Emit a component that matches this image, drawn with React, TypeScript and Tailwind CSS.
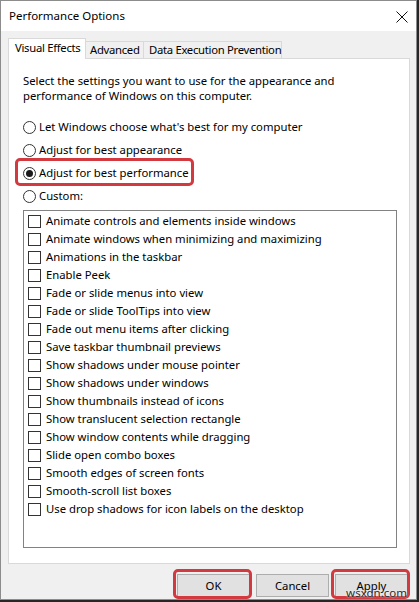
import React from "react";

const effects = [
  "Animate controls and elements inside windows",
  "Animate windows when minimizing and maximizing",
  "Animations in the taskbar",
  "Enable Peek",
  "Fade or slide menus into view",
  "Fade or slide ToolTips into view",
  "Fade out menu items after clicking",
  "Save taskbar thumbnail previews",
  "Show shadows under mouse pointer",
  "Show shadows under windows",
  "Show thumbnails instead of icons",
  "Show translucent selection rectangle",
  "Show window contents while dragging",
  "Slide open combo boxes",
  "Smooth edges of screen fonts",
  "Smooth-scroll list boxes",
  "Use drop shadows for icon labels on the desktop",
];

const radios = [
  { label: "Let Windows choose what's best for my computer", checked: false },
  { label: "Adjust for best appearance", checked: false },
  { label: "Adjust for best performance", checked: true },
  { label: "Custom:", checked: false },
];

function Radio({ checked }: { checked: boolean }) {
  return (
    <span className="w-[13px] h-[13px] rounded-full border border-[#333] bg-white flex items-center justify-center shrink-0">
      {checked && <span className="w-[7px] h-[7px] rounded-full bg-[#1a1a1a]" />}
    </span>
  );
}

function Button({ label, marked }: { label: string; marked?: boolean }) {
  return (
    <div className="relative">
      <button className="w-[73px] h-[23px] bg-[#e1e1e1] border border-[#adadad] text-[11.3px] leading-none text-black">
        {label}
      </button>
      {marked && (
        <div className="absolute -left-[4px] -right-[2px] -top-[3px] -bottom-[2px] border-[3px] border-[#d23a40] rounded-[5px]" />
      )}
    </div>
  );
}

export default function App() {
  return (
    <div
      className="w-[419px] h-[602px] bg-[#262626] text-black"
      style={{ fontFamily: '"Segoe UI", "Noto Sans", sans-serif' }}
    >
      <div className="w-[417px] h-[600px] border border-[#8c8c8c] bg-[#f0f0f0] flex flex-col">
        {/* title bar */}
        <div className="h-[30px] bg-white flex items-center justify-between pl-[8px] pr-[8px]">
          <span className="text-[11.5px]">Performance Options</span>
          <svg width="12" height="12" viewBox="0 0 12 12" className="mt-[1px]">
            <path d="M0.5 0.5 L11.5 11.5 M11.5 0.5 L0.5 11.5" stroke="#111" strokeWidth="1" />
          </svg>
        </div>

        <div className="flex-1 px-[7px] pt-[7px]">
          {/* tabs */}
          <div className="h-[20px] flex items-end text-[11.3px] tracking-[-0.3px] whitespace-nowrap">
            <div className="relative z-10 -mb-px h-[21px] w-[78px] bg-white border border-[#d9d9d9] border-b-0 pl-[6px] leading-[18px]">
              Visual Effects
            </div>
            <div className="h-[17px] w-[58px] border border-[#d9d9d9] border-b-0 border-l-0 pl-[4px] leading-[16px]">
              Advanced
            </div>
            <div className="h-[17px] w-[138px] border border-[#d9d9d9] border-b-0 border-l-0 pl-[5px] leading-[16px]">
              Data Execution Prevention
            </div>
          </div>

          {/* panel */}
          <div className="relative w-[402px] h-[506px] bg-white border border-[#d9d9d9] pl-[14px] pt-[14px] text-[11.3px] whitespace-nowrap">
            <p className="leading-[15px]">
              Select the settings you want to use for the appearance and
              <br />
              performance of Windows on this computer.
            </p>

            <div className="mt-[13px] flex flex-col">
              {radios.map((r) => (
                <div key={r.label} className="h-[23px] flex items-center gap-[3px]">
                  <Radio checked={r.checked} />
                  <span>{r.label}</span>
                </div>
              ))}
            </div>

            <div className="mt-[2px] w-[374px] h-[338px] border border-[#828282] pl-[4px] pt-px flex flex-col">
              {effects.map((e) => (
                <div key={e} className="h-[18px] flex items-center gap-[5px]">
                  <span className="w-[13px] h-[13px] border border-[#333] bg-white shrink-0" />
                  <span>{e}</span>
                </div>
              ))}
            </div>

            <div className="absolute left-[6px] top-[99px] w-[179px] h-[28px] border-[3px] border-[#d23a40] rounded-[5px]" />
          </div>

          {/* buttons */}
          <div className="relative mt-[8px] w-[402px] flex justify-end gap-[6px] pr-[2px]">
            <Button label="OK" marked />
            <Button label="Cancel" />
            <Button label="Apply" marked />
            <span className="absolute right-[3px] top-[15px] text-[11.5px] leading-none text-[#2a2a2a] [text-shadow:0_0_2px_#fff]">
              wsxdn.com
            </span>
          </div>
        </div>
      </div>
    </div>
  );
}
